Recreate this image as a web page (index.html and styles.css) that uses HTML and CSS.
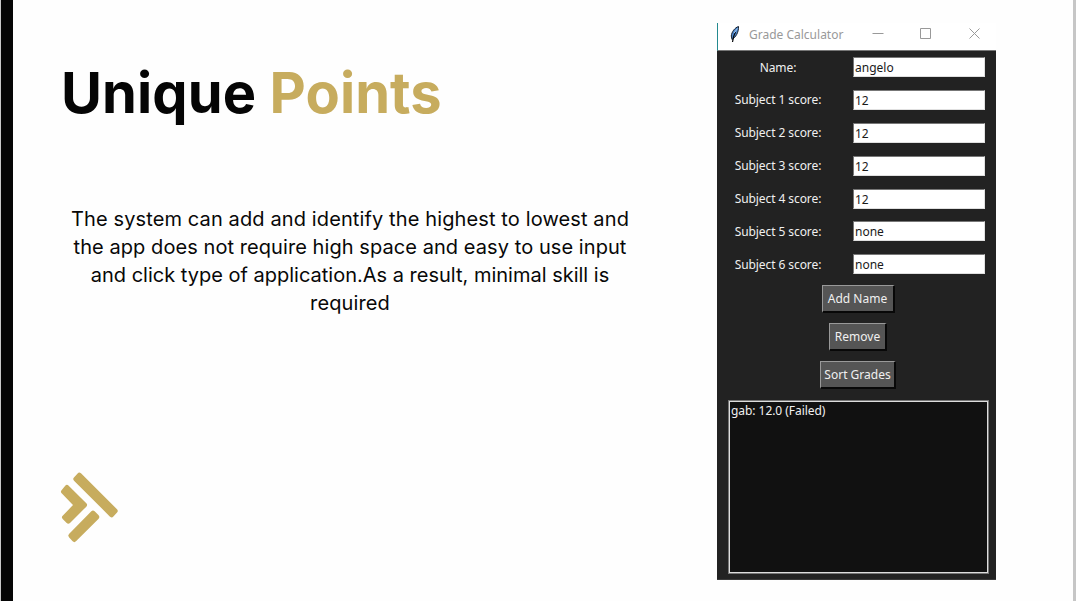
FILE: index.html
```html
<!DOCTYPE html>
<html lang="en">
<head>
<meta charset="utf-8">
<title>Unique Points</title>
<link rel="stylesheet" href="styles.css">
</head>
<body>
<main class="slide">
  <section class="copy">
    <h1 class="title">Unique <span class="accent">Points</span></h1>
    <p class="lead"><span class="wide">The system can add and identify the highest to lowest and</span><br><span class="mid">the app does not require high space and easy to use input</span><br>and click type of application.As a result, minimal skill is<br><span class="wide">required</span></p>
    <svg class="mark" viewBox="60 36 180 213">
      <path d="M118 45 L226 153 L215 165 L107 57 Z"/>
      <path d="M81 82 L134 135 L85 184 L73 172 L109 135 L70 95 Z"/>
      <path d="M159 159 L171 171 L103 239 L92 227 Z"/>
    </svg>
  </section>
  <section class="window">
    <header class="titlebar">
      <svg class="feather" viewBox="0 0 12 18">
        <path d="M9.500 1.500 C6 2.500 2.500 7 2.300 11 L3 14.500 C6.500 12.500 9.800 7.500 9.500 1.500 Z" fill="#4c86cc" stroke="#18222f" stroke-width="1"/>
        <path d="M6.500 7 C5 9.500 4 13 3.500 17" fill="none" stroke="#06080b" stroke-width="1.200"/>
        <path d="M8.500 3.500 L5 8" stroke="#a5c9ee" stroke-width="1"/>
      </svg>
      <span class="caption">Grade Calculator</span>
      <svg class="controls" viewBox="0 0 110 12">
        <path d="M1.500 5.500 H12.500 M49.500 0.500 H59.500 V10.500 H49.500 Z M98.500 0.500 L108.500 10.500 M108.500 0.500 L98.500 10.500"/>
      </svg>
    </header>
    <div class="form">
      <div class="row"><span class="label">Name:</span><span class="entry">angelo</span></div>
      <div class="row"><span class="label">Subject 1 score:</span><span class="entry">12</span></div>
      <div class="row"><span class="label">Subject 2 score:</span><span class="entry">12</span></div>
      <div class="row"><span class="label">Subject 3 score:</span><span class="entry">12</span></div>
      <div class="row"><span class="label">Subject 4 score:</span><span class="entry">12</span></div>
      <div class="row"><span class="label">Subject 5 score:</span><span class="entry">none</span></div>
      <div class="row"><span class="label">Subject 6 score:</span><span class="entry">none</span></div>
    </div>
    <div class="actions">
      <div class="button add">Add Name</div>
      <div class="button remove">Remove</div>
      <div class="button sort">Sort Grades</div>
    </div>
    <div class="listbox">gab: 12.0 (Failed)</div>
  </section>
</main>
</body>
</html>
```
FILE: styles.css
```css
* { box-sizing: border-box; }
body { margin: 0; background: #fefefe; }
.slide {
  display: flex;
  width: 1076px;
  height: 601px;
  overflow: hidden;
  border-right: 3px solid #c6c6c6;
  background: linear-gradient(to right, #c8c8c8 1px, #050505 1px, #050505 13px, #fefefe 13px);
  font-family: Inter, sans-serif;
}
.copy {
  display: flex;
  flex-direction: column;
  width: 656px;
  padding: 59px 0 0 61px;
  margin-right: 61px;
}
.title {
  margin: 0;
  font-size: 56px;
  line-height: 69px;
  letter-spacing: 0.100px;
  font-weight: 700;
  color: #050505;
  white-space: nowrap;
}
.accent { color: #c7ac5e; }
.lead {
  width: 578px;
  margin: 77px 0 0;
  font-size: 20px;
  line-height: 28px;
  text-align: center;
  white-space: nowrap;
  color: #080808;
}
.wide { letter-spacing: 0.120px; }
.mid { letter-spacing: 0.070px; }
.mark { width: 60px; height: 71px; margin-top: 155px; margin-left: -1px; }
.mark path {
  fill: #c7ac5e;
  stroke: #c7ac5e;
  stroke-width: 14px;
  stroke-linejoin: round;
}
.window {
  display: flex;
  flex-direction: column;
  width: 279px;
  height: 557px;
  margin-top: 23px;
  background: #222;
  border-bottom: 1px solid #393939;
  font: 12px/18px "Noto Sans", sans-serif;
  color: #f0f0f0;
  white-space: nowrap;
}
.titlebar {
  display: flex;
  align-items: center;
  height: 28px;
  padding: 0 15px 5px 11px;
  background: #fff;
  border-left: 1px solid #248a8f;
  border-bottom: 1px solid #777;
  color: #999;
}
.feather { width: 12px; height: 18px; margin-right: 8px; }
.caption { width: 95px; padding-top: 1px; }
.controls { width: 110px; height: 12px; margin-left: auto; }
.controls path { fill: none; stroke: #999; stroke-width: 1px; }
.form {
  display: grid;
  grid-auto-rows: 20px;
  row-gap: 12.900px;
  padding: 6px 11px 0 17px;
}
.row { display: flex; align-items: center; justify-content: space-between; }
.label { width: 88px; padding-top: 1px; text-align: center; letter-spacing: -0.080px; }
.entry {
  width: 132px;
  height: 20px;
  padding-left: 1px;
  line-height: 19px;
  background: #fff;
  color: #1a1a1a;
  border: 1px solid #777;
  border-right-color: #e0e0e0;
  border-bottom-color: #e0e0e0;
}
.actions {
  display: flex;
  flex-direction: column;
  align-items: center;
  gap: 10px;
  padding: 11px 0 0 3px;
}
.button {
  height: 28px;
  line-height: 26px;
  text-align: center;
  background: #555;
  border: 1px solid #999;
  border-right: 2px solid #080808;
  border-bottom: 2px solid #080808;
}
.add { width: 73px; }
.remove { width: 58px; }
.sort { width: 76px; }
.listbox {
  width: 261px;
  height: 174px;
  margin: 11px 0 0 11px;
  padding: 1px 0 0 2px;
  background: #111;
  border: 1px solid #777;
  box-shadow: inset 0 0 0 1px #ddd;
  letter-spacing: -0.050px;
}
```
